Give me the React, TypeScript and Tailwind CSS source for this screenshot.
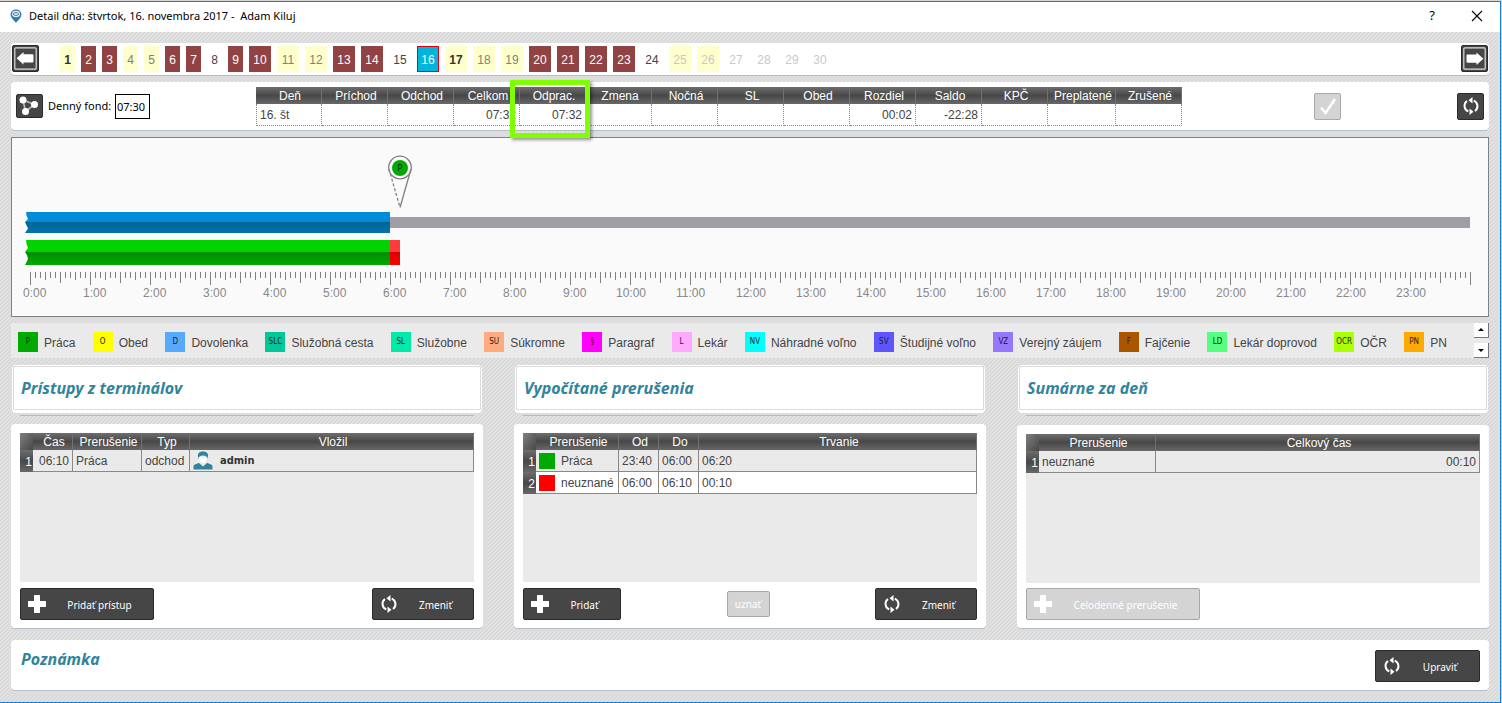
import { ReactNode } from 'react';
import { clsx } from 'clsx';

const HEAD = 'bg-linear-to-b from-[#6e6e6e] via-[#484848] to-[#686868] text-white font-normal';

type DayKind = 'work' | 'weekend' | 'holiday' | 'plain' | 'today' | 'futureWeekend' | 'future';

const kinds: Record<DayKind, string> = {
    work: 'bg-[#914343] text-white',
    weekend: 'bg-[#ffffcc] text-[#808080]',
    holiday: 'bg-[#ffffcc] text-[#333] font-bold',
    plain: 'text-[#444]',
    today: 'bg-[#00b4dc] text-white border border-red-600',
    futureWeekend: 'bg-[#ffffcc] text-[#c8c8c8]',
    future: 'text-[#c8c8c8]',
};

const dayKind = (day: number): DayKind => {
    if (day === 16) return 'today';
    if (day === 1 || day === 17) return 'holiday';
    if ([4, 5, 11, 12, 18, 19].includes(day)) return 'weekend';
    if ([25, 26].includes(day)) return 'futureWeekend';
    if ([8, 15, 24].includes(day)) return 'plain';
    return day > 26 ? 'future' : 'work';
};

const summary = [
    { name: 'Deň', value: '16. št' },
    { name: 'Príchod', value: '' },
    { name: 'Odchod', value: '' },
    { name: 'Celkom', value: '07:32' },
    { name: 'Odprac.', value: '07:32' },
    { name: 'Zmena', value: '' },
    { name: 'Nočná', value: '' },
    { name: 'SL', value: '' },
    { name: 'Obed', value: '' },
    { name: 'Rozdiel', value: '00:02' },
    { name: 'Saldo', value: '-22:28' },
    { name: 'KPČ', value: '' },
    { name: 'Preplatené', value: '' },
    { name: 'Zrušené', value: '' },
];

const legend = [
    { code: 'P', name: 'Práca', color: 'bg-[#00aa00]' },
    { code: 'O', name: 'Obed', color: 'bg-[#ffff00]' },
    { code: 'D', name: 'Dovolenka', color: 'bg-[#55aaff]' },
    { code: 'SLC', name: 'Služobná cesta', color: 'bg-[#00c89b]' },
    { code: 'SL', name: 'Služobne', color: 'bg-[#00ebaa]' },
    { code: 'SU', name: 'Súkromne', color: 'bg-[#ffaa7f]' },
    { code: '§', name: 'Paragraf', color: 'bg-[#ff00ff]' },
    { code: 'L', name: 'Lekár', color: 'bg-[#ffaaff]' },
    { code: 'NV', name: 'Náhradné voľno', color: 'bg-[#00ffff]' },
    { code: 'SV', name: 'Študijné voľno', color: 'bg-[#5f55ff]' },
    { code: 'VZ', name: 'Verejný záujem', color: 'bg-[#9678ff]' },
    { code: 'F', name: 'Fajčenie', color: 'bg-[#aa5500]' },
    { code: 'LD', name: 'Lekár doprovod', color: 'bg-[#55ff7f]' },
    { code: 'OCR', name: 'OČR', color: 'bg-[#aaff00]' },
    { code: 'PN', name: 'PN', color: 'bg-[#ffaa00]' },
];

export default function App() {
    return (
        <div className="min-h-screen bg-[#d6d6d6] pt-px pr-px font-['Liberation_Sans',Arial,sans-serif] text-xs text-[#444]">
            <div className="border-t border-r border-b border-[#1080dc]">
                <TitleBar />
                <main className="px-[11px] py-[11px] bg-[#e1e1e1] bg-[linear-gradient(135deg,#d2d2d2_12.5%,#e1e1e1_12.5%,#e1e1e1_50%,#d2d2d2_50%,#d2d2d2_62.5%,#e1e1e1_62.5%)] bg-[size:4px_4px]">
                    <DayStrip />
                    <SummaryBar />
                    <Timeline />
                    <Legend />
                    <div className="mt-[7px] grid grid-cols-3 gap-x-[31px]">
                        <Column title="Prístupy z terminálov">
                            <Accesses />
                            <div className="mt-auto flex justify-between">
                                <ActionButton icon={<PlusIcon />} width="w-[134px]">Pridať prístup</ActionButton>
                                <ActionButton icon={<SyncIcon />} width="w-[102px]">Zmeniť</ActionButton>
                            </div>
                        </Column>
                        <Column title="Vypočítané prerušenia">
                            <Interruptions />
                            <div className="mt-auto flex justify-between items-center">
                                <ActionButton icon={<PlusIcon />} width="w-[98px]">Pridať</ActionButton>
                                <button disabled className="w-[43px] h-[26px] pt-[2px] rounded-xs border border-[#a8a8a8] bg-[#d4d4d4] text-white text-[10px] font-['Noto_Sans',sans-serif]">uznať</button>
                                <ActionButton icon={<SyncIcon />} width="w-[102px]">Zmeniť</ActionButton>
                            </div>
                        </Column>
                        <Column title="Sumárne za deň" lower>
                            <DayTotals />
                            <div className="mt-auto flex">
                                <ActionButton icon={<PlusIcon />} width="w-[174px]" disabled>Celodenné prerušenie</ActionButton>
                            </div>
                        </Column>
                    </div>
                    <section className="mt-[11px] h-[51px] flex justify-between items-start rounded-sm border-b border-[#b4bec8] bg-white pl-[10px] pr-[9px] pt-[10px]">
                        <Heading>Poznámka</Heading>
                        <ActionButton icon={<SyncIcon />} width="w-[105px]">Upraviť</ActionButton>
                    </section>
                </main>
            </div>
        </div>
    );
}

function TitleBar() {
    return (
        <header className="flex items-center h-[30px] bg-white pl-[10px] pr-[17px] pb-[2px] text-black">
            <svg width="12" height="14" viewBox="0 0 12 14">
                <path d="M6 0.5C2.8 0.5 0.6 2.7 0.6 5.5c0 3 3 5.4 5.4 8.2 2.4-2.8 5.4-5.2 5.4-8.2C11.4 2.7 9.2 0.5 6 0.5Z" fill="#2a7ab8" />
                <ellipse cx="6" cy="5" rx="4" ry="3.2" fill="#e8eef2" />
                <ellipse cx="6" cy="5" rx="2.6" ry="1.4" fill="none" stroke="#68798a" />
            </svg>
            <h1 className="ml-[7px] font-['Noto_Sans',sans-serif] text-[11px] whitespace-pre">Detail dňa: štvrtok, 16. novembra 2017 -  Adam Kiluj</h1>
            <button className="ml-auto w-[10px] font-['Noto_Sans',sans-serif] text-[13px]">?</button>
            <button aria-label="Zavrieť" className="ml-[34px]">
                <svg width="12" height="12" viewBox="0 0 12 12" stroke="#000" strokeWidth="1.1">
                    <path d="M1 1l10 10M11 1L1 11" />
                </svg>
            </button>
        </header>
    );
}

function DayStrip() {
    return (
        <nav className="flex items-start h-[33px] rounded-sm border-b border-[#b4bec8] bg-white px-px pt-[2px]">
            <ArrowButton label="Predchádzajúci deň" />
            <div className="ml-[21px] mt-px flex gap-[6px]">
                {Array.from({ length: 30 }, (_, i) => i + 1).map((day) => (
                    <button key={day} className={clsx('h-[26px] pt-[2px]', day < 10 ? 'w-[15px]' : 'w-[22px]', kinds[dayKind(day)])}>
                        {day}
                    </button>
                ))}
            </div>
            <ArrowButton label="Nasledujúci deň" right />
        </nav>
    );
}

function ArrowButton({ label, right }: { label: string, right?: boolean }) {
    return (
        <button aria-label={label} className={clsx('size-[27px] rounded-xs border border-[#2a2a2a] bg-[#464646] flex items-center justify-center', right && 'ml-auto rotate-180')}>
            <svg width="23" height="23" viewBox="0 0 23 23">
                <rect x="0.8" y="0.8" width="21.4" height="21.4" rx="1" fill="none" stroke="#ddd" strokeWidth="1.2" />
                <path d="M2.600 11.300L9.500 5V7.200H18.500a1 1 0 0 1 1 1v6.200a1 1 0 0 1-1 1H9.500V17.600Z" fill="#fff" />
            </svg>
        </button>
    );
}

function SummaryBar() {
    return (
        <section className="mt-[6px] h-[49px] flex items-center rounded-sm border-b border-[#b4bec8] bg-white pl-[5px] pr-[5px]">
            <button aria-label="Graf" className="w-[27px] h-6 rounded-xs border border-[#2a2a2a] bg-[#464646] flex items-center justify-center">
                <svg width="23" height="20" viewBox="0 0 23 20" fill="#fff">
                    <path d="M5 4L16.500 8.500L7.500 15.500Z" fill="none" stroke="#bbb" strokeWidth="1.600" />
                    <circle cx="5" cy="4" r="3.500" />
                    <circle cx="16.500" cy="8.500" r="3.500" />
                    <circle cx="7.500" cy="15.500" r="3.500" />
                </svg>
            </button>
            <label htmlFor="fond" className="ml-[5px] w-[67px] pt-px font-['Noto_Sans',sans-serif] text-[11px] text-black">Denný fond:</label>
            <input id="fond" defaultValue="07:30" className="w-[35px] h-[25px] border border-black bg-white pl-px font-['Noto_Sans',sans-serif] text-[11px] text-black" />
            <table className="ml-[106px] table-fixed border-separate border-spacing-0 w-[926px]">
                <thead>
                    <tr>
                        {summary.map((col) => (
                            <th key={col.name} className={clsx('relative h-[17px] p-0 pl-[3px] pt-px leading-4 border-r border-[#707070]', HEAD, col.name === 'Preplatené' && 'w-[68px]')}>
                                {col.name}
                                {col.name === 'Odprac.' && (
                                    <span className="absolute z-10 -left-[10px] -top-[7px] w-20 h-[58px] border-5 border-[#80ff00] shadow-[2px_2px_3px_rgba(0,0,0,0.4)]" />
                                )}
                            </th>
                        ))}
                    </tr>
                </thead>
                <tbody>
                    <tr>
                        {summary.map((col, i) => (
                            <td key={col.name} className={clsx('h-[22px] p-0 pt-px pr-[3px] border-r border-b border-dotted border-[#888]', i === 0 ? 'border-l pl-[3px]' : 'text-right')}>
                                {col.value}
                            </td>
                        ))}
                    </tr>
                </tbody>
            </table>
            <button disabled aria-label="Potvrdiť" className="ml-auto size-[27px] rounded-xs border border-[#a8a8a8] bg-[#d4d4d4] flex items-center justify-center">
                <svg width="20" height="20" viewBox="0 0 20 20" fill="none" stroke="#fff" strokeWidth="2.4">
                    <path d="M3 11.500L7.500 17L17 3" />
                </svg>
            </button>
            <button aria-label="Obnoviť" className="ml-[116px] size-[27px] rounded-xs border border-[#2a2a2a] bg-[#464646] flex items-center justify-center text-white">
                <SyncIcon />
            </button>
        </section>
    );
}

// 5 px for every five minutes, midnight at x = 18
function Timeline() {
    const ticks = Array.from({ length: 289 }, (_, i) => i);
    const hours = Array.from({ length: 24 }, (_, i) => i);
    const tickLength = (i: number) => (i % 12 === 0 ? 13 : i % 6 === 0 ? 11 : i % 3 === 0 ? 8 : 6);

    return (
        <section className="mt-[6px] border border-[#7c8288] bg-[#fafafa]">
            <svg viewBox="0 0 1476 178" className="block w-full h-auto">
                <defs>
                    <linearGradient id="blue" x1="0" y1="0" x2="0" y2="1">
                        <stop offset="0" stopColor="#006496" />
                        <stop offset="1" stopColor="#0073b0" />
                    </linearGradient>
                    <linearGradient id="green" x1="0" y1="0" x2="0" y2="1">
                        <stop offset="0" stopColor="#008c00" />
                        <stop offset="1" stopColor="#00aa00" />
                    </linearGradient>
                    <linearGradient id="red" x1="0" y1="0" x2="0" y2="1">
                        <stop offset="0" stopColor="#d80000" />
                        <stop offset="1" stopColor="#ff0000" />
                    </linearGradient>
                </defs>
                <rect x="378" y="79" width="1080" height="11" fill="#a09ea4" />
                <path d="M14 74H378V84H13L16 81L14.500 77.500Z" fill="#008cd8" />
                <path d="M13 84H378V95H13L16 90.500Z" fill="url(#blue)" />
                <path d="M14 102H378V114H13L16 110L14.500 106Z" fill="#00d400" />
                <path d="M13 114H378V127H13L16 121L15 117Z" fill="url(#green)" />
                <rect x="378" y="102" width="10" height="12" fill="#ff3a3a" />
                <rect x="378" y="114" width="10" height="13" fill="url(#red)" />
                <g fill="none" stroke="#808080" strokeWidth="1.3">
                    <circle cx="388" cy="29.500" r="11.300" fill="#fff" />
                    <path d="M399 31L388 69.500" />
                    <path d="M377 31L388 69.500" strokeDasharray="3 2" />
                </g>
                <circle cx="388" cy="30" r="8" fill="#00aa00" />
                <text x="388" y="33" textAnchor="middle" fontSize="8" fill="#222" className="font-['DejaVu_Sans',sans-serif]">P</text>
                <g fill="#808080">
                    {ticks.map((i) => (
                        <rect key={i} x={18 + i * 5} y="134" width="1" height={tickLength(i)} />
                    ))}
                </g>
                <g fill="#888" fontSize="12">
                    {hours.map((h) => (
                        <text key={h} x={h < 10 ? 11 + h * 60 : 4 + h * 60} y="159">{h}:00</text>
                    ))}
                </g>
            </svg>
        </section>
    );
}

function Legend() {
    return (
        <section className="mt-[6px] h-[35px] flex bg-[#eaeaea] pl-[7px]">
            <ul className="flex-1 flex items-center justify-between pt-[3px] pr-[27px]">
                {legend.map((item) => (
                    <li key={item.code} className="flex items-center gap-[6px] whitespace-nowrap">
                        <span className={clsx('size-5 flex items-center justify-center text-[8px] text-[#222] font-["DejaVu_Sans_Condensed","DejaVu_Sans",sans-serif]', item.color)}>{item.code}</span>
                        <span className="pt-[2px]">{item.name}</span>
                    </li>
                ))}
            </ul>
            <div className="w-[15px] flex flex-col justify-between">
                <ScrollButton label="Hore" d="M4 8L7 5L10 8Z" />
                <ScrollButton label="Dole" d="M4 6L7 9L10 6Z" />
            </div>
        </section>
    );
}

function ScrollButton({ label, d }: { label: string, d: string }) {
    return (
        <button aria-label={label} className="size-[15px] border-r border-b border-[#777] bg-white">
            <svg width="14" height="14" viewBox="0 0 14 14"><path d={d} /></svg>
        </button>
    );
}

function Column({ title, lower, children }: { title: string, lower?: boolean, children: ReactNode }) {
    return (
        <div className="flex flex-col">
            <div className="mx-px h-12 rounded-sm bg-white p-px pb-[3px]">
                <div className="h-full border border-[#dcdcdc] pl-[7px] flex items-center">
                    <Heading>{title}</Heading>
                </div>
            </div>
            <div className="mx-[9px] mt-[2px] h-px bg-[#b4bac0]" />
            <section className={clsx('flex-1 flex flex-col rounded-sm border-b border-[#b4bec8] bg-white px-[9px] pt-[9px] pb-2', lower ? 'mt-[9px]' : 'mt-2 min-h-[205px]')}>
                {children}
            </section>
        </div>
    );
}

function Heading({ children }: { children: ReactNode }) {
    return <h2 className="font-['Noto_Sans',sans-serif] text-base leading-[18px] font-bold italic text-[#31849b]">{children}</h2>;
}

function Grid({ columns, children }: { columns: { name: string, width?: string }[], children: ReactNode }) {
    return (
        <div className="h-[149px] bg-[#eaeaea]">
            <table className="w-full table-fixed border-separate border-spacing-0">
                <thead>
                    <tr>
                        <td className="w-[13px] h-[17px] p-0 bg-linear-to-br from-[#808080] to-[#484848]" />
                        {columns.map((col) => (
                            <th key={col.name} className={clsx('h-[17px] p-0 pl-[3px] leading-4 border-r border-[#707070]', HEAD, col.width)}>{col.name}</th>
                        ))}
                    </tr>
                </thead>
                <tbody>{children}</tbody>
            </table>
        </div>
    );
}

function Row({ index, cells, white }: { index: number, cells: ReactNode[], white?: boolean }) {
    return (
        <tr>
            <th className={clsx('h-[22px] p-0 pt-px pr-px text-right', HEAD)}>{index}</th>
            {cells.map((cell, i) => (
                <td key={i} className={clsx('h-[22px] p-0 pl-[3px] border-r border-b border-[#888] whitespace-nowrap', white && 'bg-white')}>{cell}</td>
            ))}
        </tr>
    );
}

function Accesses() {
    const user = (
        <span className="flex items-center gap-[7px] font-['DejaVu_Sans_Condensed','DejaVu_Sans',sans-serif] text-[11px] font-bold text-[#333]">
            <svg width="20" height="19" viewBox="0 0 20 19" fill="#31849b">
                <path d="M5 5.500C4.500 2 6.500 0.500 10 0.500S15.500 2 15 5.500L14.200 8C14 5.500 13 4.500 10 4.500S6 5.500 5.800 8Z" />
                <path d="M5.800 6C6 10 8 12 10 12s4-2 4.200-6" fill="#fff" />
                <path d="M0.500 18.500V15.500C0.500 13.500 3 13 6 12L10 15.500L14 12C17 13 19.500 13.500 19.500 15.500V18.500Z" />
            </svg>
            <span className="pt-[2px]">admin</span>
        </span>
    );
    return (
        <Grid columns={[{ name: 'Čas', width: 'w-10' }, { name: 'Prerušenie', width: 'w-[69px]' }, { name: 'Typ', width: 'w-12' }, { name: 'Vložil' }]}>
            <Row index={1} cells={[<span className="block text-center">06:10</span>, 'Práca', 'odchod', user]} />
        </Grid>
    );
}

function Interruptions() {
    const swatch = (name: string, color: string) => (
        <span className="flex items-center gap-[6px]"><i className={clsx('size-4', color)} />{name}</span>
    );
    return (
        <Grid columns={[{ name: 'Prerušenie', width: 'w-[83px]' }, { name: 'Od', width: 'w-10' }, { name: 'Do', width: 'w-10' }, { name: 'Trvanie' }]}>
            <Row index={1} cells={[swatch('Práca', 'bg-[#00aa00]'), '23:40', '06:00', '06:20']} />
            <Row index={2} white cells={[swatch('neuznané', 'bg-[#ff0000]'), '06:00', '06:10', '00:10']} />
        </Grid>
    );
}

function DayTotals() {
    return (
        <Grid columns={[{ name: 'Prerušenie', width: 'w-[117px]' }, { name: 'Celkový čas' }]}>
            <Row index={1} cells={['neuznané', <span className="block pr-[3px] text-right">00:10</span>]} />
        </Grid>
    );
}

function ActionButton({ icon, width, disabled, children }: { icon: ReactNode, width: string, disabled?: boolean, children: ReactNode }) {
    return (
        <button
            disabled={disabled}
            className={clsx(
                "h-8 flex items-center rounded-xs border pl-[7px] text-white text-[10px] font-['Noto_Sans',sans-serif] whitespace-nowrap",
                disabled ? 'border-[#a8a8a8] bg-[#d4d4d4]' : 'border-[#2a2a2a] bg-[#464646]',
                width,
            )}
        >
            {icon}
            <span className="flex-1 px-5 pt-[3px] text-center">{children}</span>
        </button>
    );
}

function PlusIcon() {
    return (
        <svg width="18" height="18" viewBox="0 0 18 18" fill="#fff" className="shrink-0">
            <path d="M6.500 0H11.500A0.500 0.500 0 0 1 12 0.500V6H17.500A0.500 0.500 0 0 1 18 6.500V11.500A0.500 0.500 0 0 1 17.500 12H12V17.500A0.500 0.500 0 0 1 11.500 18H6.500A0.500 0.500 0 0 1 6 17.500V12H0.500A0.500 0.500 0 0 1 0 11.500V6.500A0.500 0.500 0 0 1 0.500 6H6V0.500A0.500 0.500 0 0 1 6.500 0Z" />
        </svg>
    );
}

function SyncIcon() {
    return (
        <svg width="18" height="18" viewBox="0 0 18 18" fill="none" stroke="#fff" strokeWidth="2" className="shrink-0">
            <path d="M5 4A6 6 0 0 0 6.300 14.400M13 14A6 6 0 0 0 11.700 3.600" />
            <path d="M6.500 3.200L10.500 0V6.400ZM11.500 14.800L7.500 11.600V18Z" fill="#fff" stroke="none" transform="matrix(1 0 0 1 0 0)" />
        </svg>
    );
}
